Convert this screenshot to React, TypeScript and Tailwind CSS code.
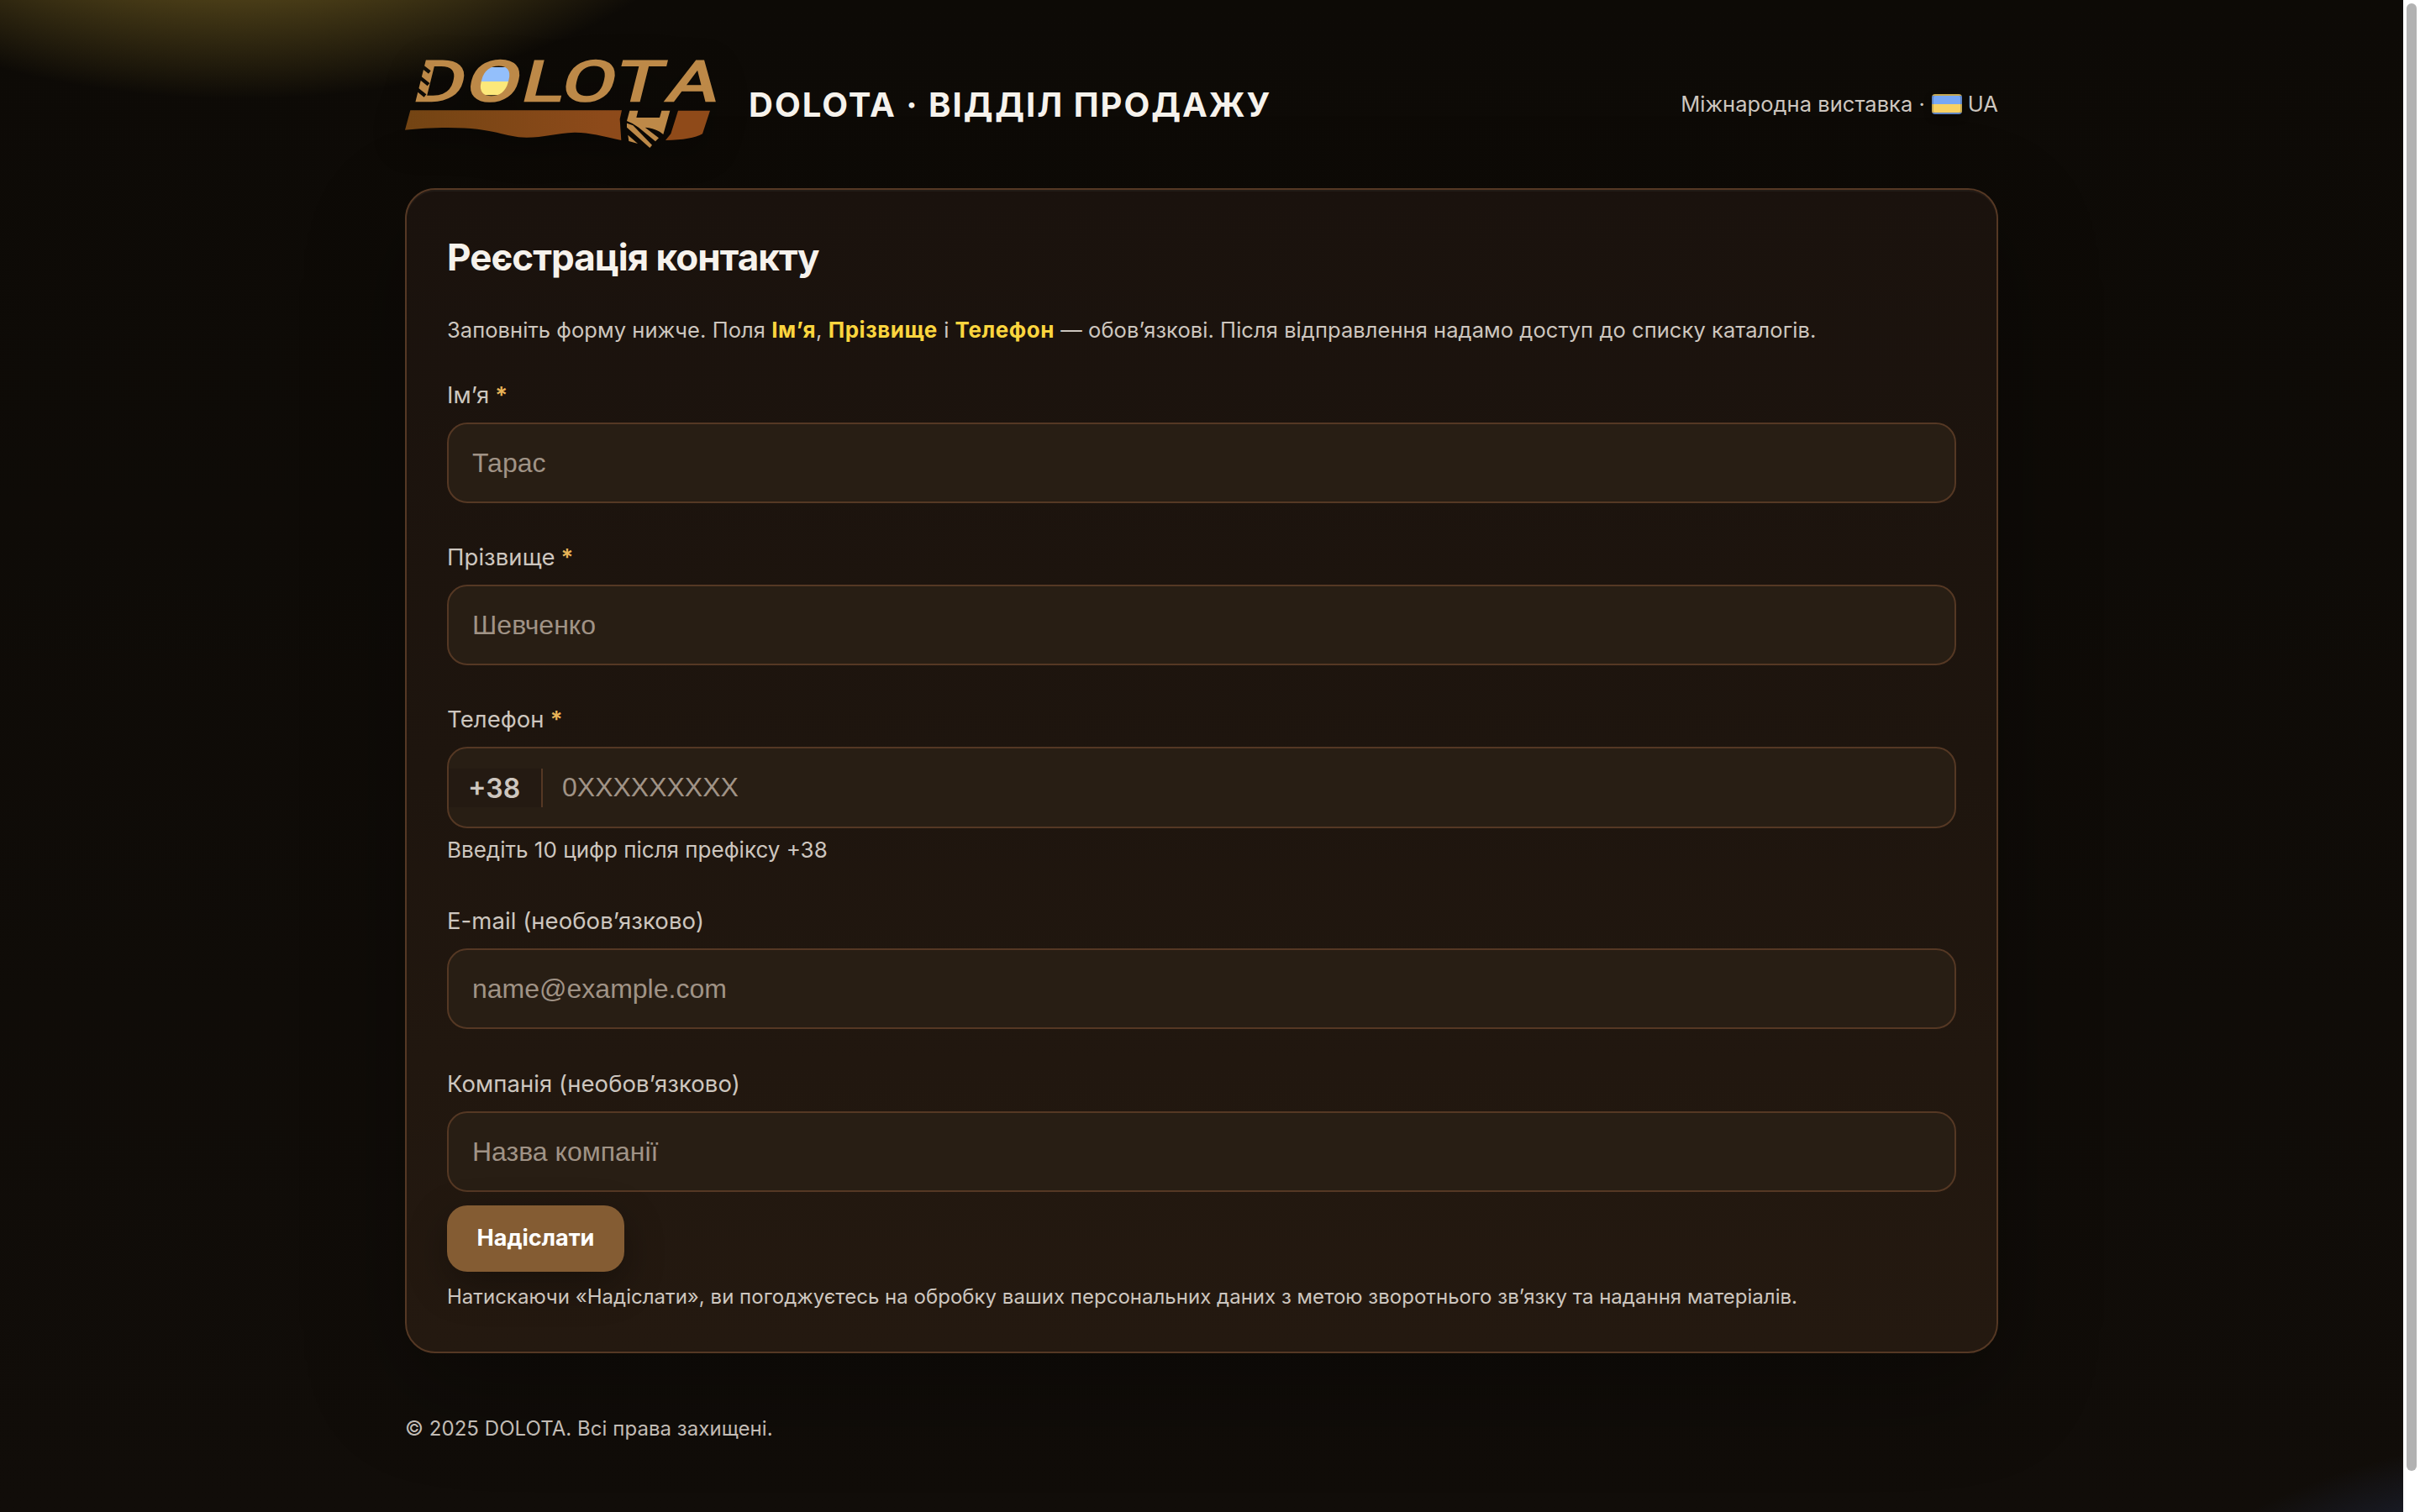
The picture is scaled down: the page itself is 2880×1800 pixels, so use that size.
import React from "react";

function Logo() {
  return (
    <svg
      viewBox="36 36 1131 312"
      className="h-[104px] w-[377px] shrink-0 overflow-visible drop-shadow-[0_12px_20px_rgba(0,0,0,0.35)]"
      role="img"
      aria-label="DOLOTA"
    >
      <defs>
        <linearGradient id="wood" x1="36" x2="1125" y1="0" y2="0" gradientUnits="userSpaceOnUse">
          <stop offset="0" stopColor="#734413" />
          <stop offset="0.65" stopColor="#8d4a1a" />
          <stop offset="1" stopColor="#8f4a19" />
        </linearGradient>
        <mask id="cuts" maskUnits="userSpaceOnUse" x="0" y="0" width="1200" height="360">
          <rect width="1200" height="360" fill="#fff" />
          <path d="M78 42L124 78M68 80L120 122M58 122L108 162" stroke="#000" strokeWidth="13" />
        </mask>
      </defs>
      <g transform="translate(0 158) skewX(-14)">
        <rect x="294" y="-98" width="122" height="100" rx="24" fill="#fce87a" />
        <path d="M294 -47V-74Q294 -98 318 -98H392Q416 -98 416 -74V-47Z" fill="#93bffb" />
      </g>
      <g mask="url(#cuts)">
        <g transform="translate(0 181) skewX(-14) scale(1.38 1)">
          <text
            x="41 177 321 424 562 698"
            y="0"
            fontFamily="Roboto, sans-serif"
            fontWeight="400"
            fontSize="200"
            fill="#bd8948"
            stroke="#bd8948"
            strokeWidth="7"
          >
            DOLOTA
          </text>
        </g>
      </g>
      <path
        fill="url(#wood)"
        d="M55 214H810L803 245L808 321C740 306 690 292 640 293C580 295 530 311 470 311C390 311 360 276 190 276C130 276 80 280 36 284Z"
      />
      <path fill="#8f4a19" d="M1011 215H1125L1098 298Q1060 320 966 321L985 298Z" />
      <g fill="#bd8948">
        <path d="M838 215H868L862 240H945L952 215H982L958 300L945 290Q920 277 893 275L942 313L930 325L870 275Q850 260 828 252Z" />
        <path d="M828 260L850 268L918 338L910 348L828 275Z" />
        <path d="M832 302L867 333L835 324Z" />
      </g>
    </svg>
  );
}

function Label({ text, required }: { text: string; required?: boolean }) {
  return (
    <span className="block h-10 text-[27.5px] leading-[41px] tracking-[0.06px]">
      {text}
      {required && <span className="ml-[7px] font-semibold text-[#e9b458]">*</span>}
    </span>
  );
}

const box =
  "mt-[13px] w-full rounded-3xl border-2 border-[#553824] bg-[#281e14] font-['Liberation_Sans',sans-serif] text-[32px] text-[#f6f2ec]";

function Field({ label, placeholder, required, className }: { label: string; placeholder: string; required?: boolean; className: string }) {
  return (
    <label className={"block " + className}>
      <Label text={label} required={required} />
      <input placeholder={placeholder} className={"block h-24 px-7 outline-none placeholder:text-[#a09386] " + box} />
    </label>
  );
}

function Strong({ children }: { children: React.ReactNode }) {
  return <strong className="text-[26px] font-bold tracking-[0.55px] text-[#fbd53e]">{children}</strong>;
}

export default function App() {
  return (
    <div className="flex h-[1800px] w-[2880px] overflow-hidden bg-white font-[Inter,sans-serif] text-[#cdc6bf]">
      <div className="h-full w-[2860px] bg-[radial-gradient(594px_298px_at_286px_-180px,rgba(255,213,75,0.62),transparent),radial-gradient(650px_335px_at_3146px_2031px,rgba(80,130,246,0.6),transparent),linear-gradient(#0d0a06,#110d09)] px-[482px] pt-[72px]">
        <header className="flex h-[104px] items-center">
          <Logo />
          <div className="ml-8 pt-0.5 whitespace-nowrap text-[40px] leading-[60px] font-bold tracking-[2px] text-[#f6f2ec]">
            DOLOTA · ВІДДІЛ ПРОДАЖУ
          </div>
          <div className="ml-auto flex items-center whitespace-nowrap text-[25.5px] leading-10 tracking-[0.03px]">
            Міжнародна виставка ·
            <span className="mr-[7px] ml-[8px] h-6 w-9 rounded-[4px] border-2 border-black/20 bg-[linear-gradient(#77a7f5_50%,#f7d164_50%)] shadow-[0_4px_8px_rgba(0,0,0,0.35)]" />
            UA
          </div>
        </header>

        <main className="mt-12 rounded-[36px] border-2 border-[#553824] bg-linear-to-b from-[#1a120d] via-[#1e150e] to-[#241910] px-12 pt-12 pb-[47px] shadow-[0_40px_120px_rgba(0,0,0,0.3),inset_0_2px_0_rgba(255,255,255,0.04)]">
          <h1 className="h-[66px] text-[44px] leading-[64px] font-bold tracking-[-0.96px] text-[#f6f2ec]">
            Реєстрація контакту
          </h1>
          <p className="mt-[33px] h-10 whitespace-nowrap text-[25.5px] leading-10 tracking-[0.06px]">
            Заповніть форму нижче. Поля <Strong>Ім’я</Strong>, <Strong>Прізвище</Strong> і <Strong>Телефон</Strong> —
            обов’язкові. Після відправлення надамо доступ до списку каталогів.
          </p>

          <Field className="mt-[37px]" label="Ім’я" placeholder="Тарас" required />
          <Field className="mt-11" label="Прізвище" placeholder="Шевченко" required />

          <label className="mt-11 block">
            <Label text="Телефон" required />
            <div className={"flex h-[97px] items-center " + box}>
              <span className="flex h-[46px] w-28 items-center border-r-2 border-[#553824] bg-[#241a12] pt-0.5 pl-[23px] font-[Inter,sans-serif] font-semibold text-[#cdc6bf]">
                +38
              </span>
              <input placeholder="0XXXXXXXXX" className="h-full flex-1 px-[23px] outline-none placeholder:text-[#a09386]" />
            </div>
          </label>
          <p className="mt-2 h-9 text-[26px] leading-9">Введіть 10 цифр після префіксу +38</p>

          <Field className="mt-[46px]" label="E-mail (необов’язково)" placeholder="name@example.com" />
          <Field className="mt-[45px]" label="Компанія (необов’язково)" placeholder="Назва компанії" />

          <button className="mt-4 block h-[79px] w-[211px] rounded-3xl bg-[#845c33] text-[27px] font-bold text-white shadow-[0_16px_48px_rgba(0,0,0,0.3)]">
            Надіслати
          </button>
          <p className="mt-3 h-9 whitespace-nowrap text-[24px] leading-9 tracking-[0.02px]">
            Натискаючи «Надіслати», ви погоджуєтесь на обробку ваших персональних даних з метою зворотнього зв’язку та
            надання матеріалів.
          </p>
        </main>

        <footer className="mt-[72px] text-[24px] leading-9 tracking-[0.05px] text-[#c2bcb5]">
          © 2025 DOLOTA. Всі права захищені.
        </footer>
      </div>
      <div className="w-5 bg-white pt-1 pl-1">
        <div className="h-[1747px] w-3 rounded-full bg-[#b2b2b2]" />
      </div>
    </div>
  );
}
